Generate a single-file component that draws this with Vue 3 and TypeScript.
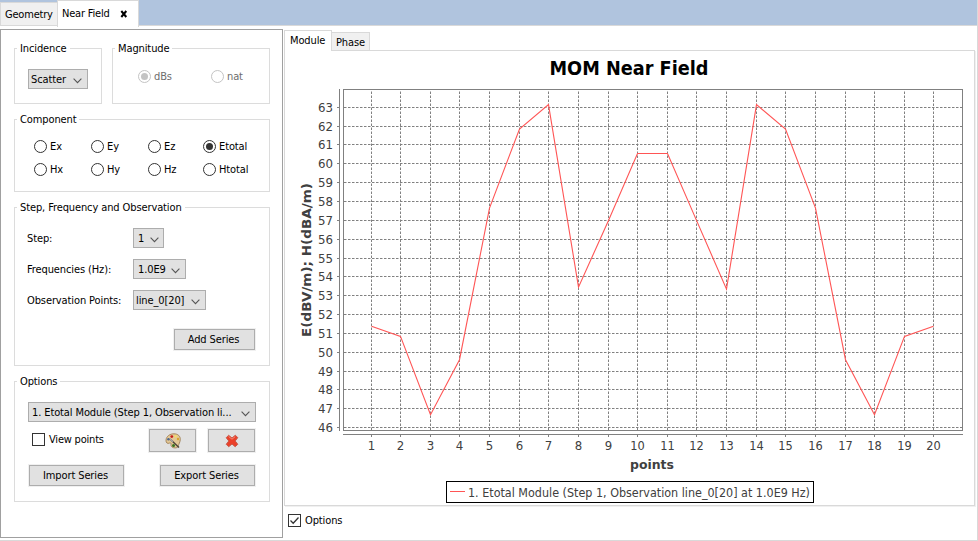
<script setup lang="ts">
interface Tick { value: number; pos: number }

const tickX: number[] = [371, 400, 430, 459, 489, 519, 548, 578, 608, 637, 667, 696, 726, 756, 785, 815, 845, 874, 904, 933]
const tickY: number[] = [427, 408, 389, 371, 352, 333, 314, 295, 276, 258, 239, 220, 201, 182, 163, 144, 126, 107]
const xTicks: Tick[] = tickX.map((pos, i) => ({ value: i + 1, pos }))
const yTicks: Tick[] = tickY.map((pos, i) => ({ value: i + 46, pos }))
const series: number[] = [51.38, 50.84, 46.68, 49.6, 57.65, 61.85, 63.15, 53.45, 57, 60.55, 60.55, 57, 53.35, 63.15, 61.85, 57.65, 49.6, 46.68, 50.84, 51.38]
const points = series.map((v, i) => `${tickX[i] + 0.5},${(427.5 - (v - 46) * 18.83).toFixed(1)}`).join(' ')
const components: string[] = ['Ex', 'Ey', 'Ez', 'Etotal', 'Hx', 'Hy', 'Hz', 'Htotal']
</script>

<template>
  <div class="window">
    <div class="tabs">
      <div class="tab geo">Geometry</div>
      <div class="tab near">Near Field
        <svg class="close" width="8" height="8" viewBox="0 0 8 8"><path d="M1.3 1l5 6M6.3 1l-5 6" stroke="#000" stroke-width="2" /></svg>
      </div>
    </div>
    <div class="body">
      <div class="side">
        <div class="pair">
          <fieldset class="inc"><legend>Incidence</legend>
            <div class="combo scatter"><span>Scatter</span><svg class="chev" viewBox="0 0 9 6"><path d="M.6 .7l3.9 3.9L8.4 .7" /></svg></div>
          </fieldset>
          <fieldset class="mag"><legend>Magnitude</legend>
            <label class="radio off"><i class="on"></i>dBs</label>
            <label class="radio off"><i></i>nat</label>
          </fieldset>
        </div>
        <fieldset class="comp"><legend>Component</legend>
          <div class="grid">
            <label v-for="c in components" :key="c" class="radio"><i :class="{ on: c === 'Etotal' }"></i>{{ c }}</label>
          </div>
        </fieldset>
        <fieldset class="step"><legend>Step, Frequency and Observation</legend>
          <div class="row"><span class="name">Step:</span><div class="combo w1"><span>1</span><svg class="chev" viewBox="0 0 9 6"><path d="M.6 .7l3.9 3.9L8.4 .7" /></svg></div></div>
          <div class="row"><span class="name">Frequencies (Hz):</span><div class="combo w2"><span>1.0E9</span><svg class="chev" viewBox="0 0 9 6"><path d="M.6 .7l3.9 3.9L8.4 .7" /></svg></div></div>
          <div class="row"><span class="name">Observation Points:</span><div class="combo w3"><span>line_0[20]</span><svg class="chev" viewBox="0 0 9 6"><path d="M.6 .7l3.9 3.9L8.4 .7" /></svg></div></div>
          <button class="btn add">Add Series</button>
        </fieldset>
        <fieldset class="opts"><legend>Options</legend>
          <div class="combo wide"><span>1. Etotal Module (Step 1, Observation li...</span><svg class="chev" viewBox="0 0 9 6"><path d="M.6 .7l3.9 3.9L8.4 .7" /></svg></div>
          <div class="tools">
            <label class="check"><b></b>View points</label>
            <button class="btn icon">
              <svg width="16" height="16" viewBox="0 0 16 16">
                <path d="M1 7C1.500 3 5 .8 9 .8c4 0 6.500 2.400 6.300 5.800-.2 3-1.600 4.200-1.800 5.900-.4 2.200-2.600 2.700-4.700 2.300-2.400-.5-3.100-2-2.800-3.500.2-1.300-.7-1.700-1.600-1.200C2.700 11 .7 10 1 7z" fill="#e3c795" stroke="#98774b" stroke-width=".8" />
                <circle cx="6.800" cy="3.600" r="1.400" fill="#c81c18" /><circle cx="10.700" cy="3.300" r="1.200" fill="#f2dc68" /><circle cx="13" cy="6" r="1.200" fill="#d8a52c" />
                <circle cx="3.500" cy="6.200" r="1.300" fill="#4b6790" /><circle cx="8.500" cy="12.400" r="1.500" fill="#38741f" />
                <path d="M5 6l9 8.500" stroke="#4e4439" stroke-width="1.500" /><path d="M5 6l3 2.800" stroke="#aaa" stroke-width="1.300" />
              </svg>
            </button>
            <button class="btn icon">
              <svg width="14" height="14" viewBox="0 0 14 14">
                <path d="M3.600 1.300L7 4l3.300-2.700 2.500 2.300L10.200 7l2.600 3.300-2.600 2.400L7 10l-3.300 2.700-2.500-2.400L3.800 7 1.200 3.700z" fill="#ec4029" stroke="#c65a4b" stroke-width="1" stroke-linejoin="round" />
                <path d="M3.600 2.500L7 5.200l3.200-2.600" fill="none" stroke="#f58a76" />
              </svg>
            </button>
          </div>
          <div class="files"><button class="btn">Import Series</button><button class="btn">Export Series</button></div>
        </fieldset>
      </div>
      <div class="main">
        <div class="subtabs"><div class="sub active">Module</div><div class="sub">Phase</div></div>
        <div class="pane">
          <svg class="chart" width="689" height="454" viewBox="285 51 689 454">
            <text class="title" x="549.500" y="75" textLength="159" lengthAdjust="spacingAndGlyphs">MOM Near Field</text>
            <g class="gridlines">
              <line v-for="t in xTicks" :key="'x' + t.value" :x1="t.pos + .5" :x2="t.pos + .5" y1="430" y2="90" />
              <line v-for="t in yTicks" :key="'y' + t.value" x1="344" x2="962" :y1="t.pos + .5" :y2="t.pos + .5" />
            </g>
            <polyline :points="points" fill="none" stroke="#ff5555" stroke-width="1.100" />
            <g class="axes">
              <rect x="343.500" y="89.500" width="619" height="341" />
              <path d="M339.500 89V431M343 434.500H963" />
              <line v-for="t in xTicks" :key="'a' + t.value" :x1="t.pos + .5" :x2="t.pos + .5" y1="435" y2="437" />
              <line v-for="t in yTicks" :key="'b' + t.value" x1="337" x2="339" :y1="t.pos + .5" :y2="t.pos + .5" />
            </g>
            <g class="nums">
              <text v-for="t in xTicks" :key="'c' + t.value" :x="t.pos + .5" y="450" text-anchor="middle" :textLength="t.value > 9 ? 14.5 : 7.5" lengthAdjust="spacingAndGlyphs">{{ t.value }}</text>
              <text v-for="t in yTicks" :key="'d' + t.value" x="333" :y="t.pos + 5" text-anchor="end" textLength="15" lengthAdjust="spacingAndGlyphs">{{ t.value }}</text>
            </g>
            <text class="axis" x="630" y="469" textLength="44" lengthAdjust="spacingAndGlyphs">points</text>
            <text class="axis" transform="translate(311 337) rotate(-90)" textLength="154" lengthAdjust="spacingAndGlyphs">E(dBV/m); H(dBA/m)</text>
            <rect x="446.500" y="481.500" width="367" height="21" fill="#fff" stroke="#000" />
            <path d="M450 491.500H465" stroke="#ff5555" />
            <text class="legend" x="468" y="497" textLength="342" lengthAdjust="spacingAndGlyphs">1. Etotal Module (Step 1, Observation line_0[20] at 1.0E9 Hz)</text>
          </svg>
        </div>
        <label class="check bottom"><b><svg viewBox="0 0 11 11"><path d="M1.500 5.500l2.700 2.700L9.500 2.500" /></svg></b>Options</label>
      </div>
    </div>
  </div>
</template>

<style>
body { margin: 0; background: #fff; }
</style>

<style scoped>
* { box-sizing: border-box; }
.window { width: 978px; height: 541px; overflow: hidden; background: #fff; border-right: 1px solid #d9d9d9; border-bottom: 1px solid #d9d9d9; font: 11px/13px "DejaVu Sans Condensed", "DejaVu Sans", sans-serif; font-stretch: condensed; color: #000; display: flex; flex-direction: column; letter-spacing: -.11px; white-space: nowrap; }
.tabs { height: 29px; display: flex; align-items: flex-start; background: linear-gradient(#b0c4de 25px, #d9d9d9 25px, #d9d9d9 26px, #fff 26px); }
.tab { letter-spacing: -.2px; }
.tab.geo { width: 57px; height: 24px; margin-top: 2px; border: 1px solid #d9d9d9; border-right: 0; background: #f0f0f0; padding: 5px 0 0 4px; }
.tab.near { width: 82px; height: 27px; border: 1px solid #d9d9d9; border-bottom: 0; background: #fff; padding: 6px 0 0 4px; display: flex; }
.close { margin: 3px 0 0 10px; }
.body { display: flex; flex: 1; }
.side { width: 283px; height: 509px; border: 1px solid #a0a0a0; padding: 12px 12px 0 13px; }
fieldset { margin: 0; border: 1px solid #dcdcdc; padding: 0; min-width: 0; }
legend { margin-left: 2px; padding: 0 3px; height: 13px; }
.pair { display: flex; justify-content: space-between; width: 256px; }
.inc { width: 88px; height: 62px; }
.mag { width: 158px; height: 62px; display: flex; }
.mag .radio { margin: 15px 0 0 25px; width: 48px; }
.combo { height: 20px; background: #e1e1e1; border: 1px solid #adadad; display: flex; align-items: center; justify-content: space-between; padding: 0 5px 0 3px; }
.chev { width: 9px; height: 6px; margin-top: 3px; fill: none; stroke: #555; stroke-width: 1.1; }
.scatter { width: 60px; margin: 14px 0 0 13px; padding-left: 2px; }
.radio { display: flex; align-items: center; height: 13px; gap: 3px; }
.radio i { width: 13px; height: 13px; border: 1px solid #333; border-radius: 50%; display: flex; align-items: center; justify-content: center; flex: none; }
.radio i.on::after { content: ""; width: 7px; height: 7px; border-radius: 50%; background: #333; }
.radio.off { color: #6d6d6d; }
.radio.off i { border-color: #c4c4c4; }
.radio.off i.on::after { background: #c4c4c4; }
.comp { width: 256px; height: 79px; margin-top: 9px; }
.grid { display: grid; grid-template-columns: 57px 57px 55px 60px; row-gap: 10px; padding: 14px 0 0 19px; }
.step { width: 256px; height: 165px; margin-top: 9px; }
.step .row { display: flex; align-items: center; height: 20px; margin: 0 0 11px 12px; }
.step .row:nth-of-type(1) { margin-top: 14px; }
.name { width: 106px; }
.w1 { width: 31px; padding-left: 4px; padding-right: 4px; }
.w2 { width: 53px; padding-left: 4px; }
.w3 { width: 73px; padding-left: 2px; }
.btn { height: 21px; padding: 0 2px 0 0; font: inherit; letter-spacing: inherit; color: #000; background: #e1e1e1; border: 1px solid #adadad; outline: 1px solid #f0f0f0; display: flex; align-items: center; justify-content: center; }
.add { width: 81px; margin: 19px 0 0 159px; }
.opts { width: 256px; height: 127px; margin-top: 9px; }
.wide { width: 228px; margin: 14px 0 0 13px; padding-left: 3px; }
.tools { display: flex; height: 23px; margin: 7px 0 0 17px; gap: 12px; }
.check { display: flex; align-items: center; gap: 4px; }
.check b { width: 13px; height: 13px; border: 1px solid #333; flex: none; display: flex; }
.check svg { width: 11px; height: 11px; fill: none; stroke: #333; stroke-width: 1.3; }
.tools .check { width: 105px; height: 21px; letter-spacing: -.2px; }
.btn.icon { width: 47px; height: 23px; padding: 0; }
.files { display: flex; justify-content: space-between; width: 226px; margin: 13px 0 0 14px; }
.files .btn { width: 95px; }
.main { flex: 1; margin-left: 1px; padding-top: 1px; }
.subtabs { display: flex; height: 20px; align-items: flex-end; }
.sub { width: 38px; height: 18px; border: 1px solid #d9d9d9; border-left: 0; border-bottom: 0; background: #f0f0f0; padding: 3px 0 0 4px; }
.sub.active { width: 48px; height: 21px; margin-bottom: -1px; border-left: 1px solid #d9d9d9; background: #fff; padding: 3px 0 0 5px; z-index: 1; }
.pane { width: 691px; height: 456px; border: 1px solid #d9d9d9; box-shadow: 1px 1px #f0f0f0; }
.chart { display: block; font-family: "DejaVu Sans", sans-serif; font-stretch: normal; letter-spacing: 0; fill: #404040; }
.title { font-family: "DejaVu Sans Condensed", "DejaVu Sans", sans-serif; font-size: 20px; font-weight: bold; fill: #000; }
.gridlines line { stroke: #808080; stroke-dasharray: 2.5 1.5; }
.axes { fill: none; stroke: #808080; }
.nums { font-size: 12px; }
.legend { font-family: "DejaVu Sans Condensed", "DejaVu Sans", sans-serif; font-size: 12px; }
.axis { font-size: 13px; font-weight: bold; }
.bottom { margin: 8px 0 0 4px; }
</style>
